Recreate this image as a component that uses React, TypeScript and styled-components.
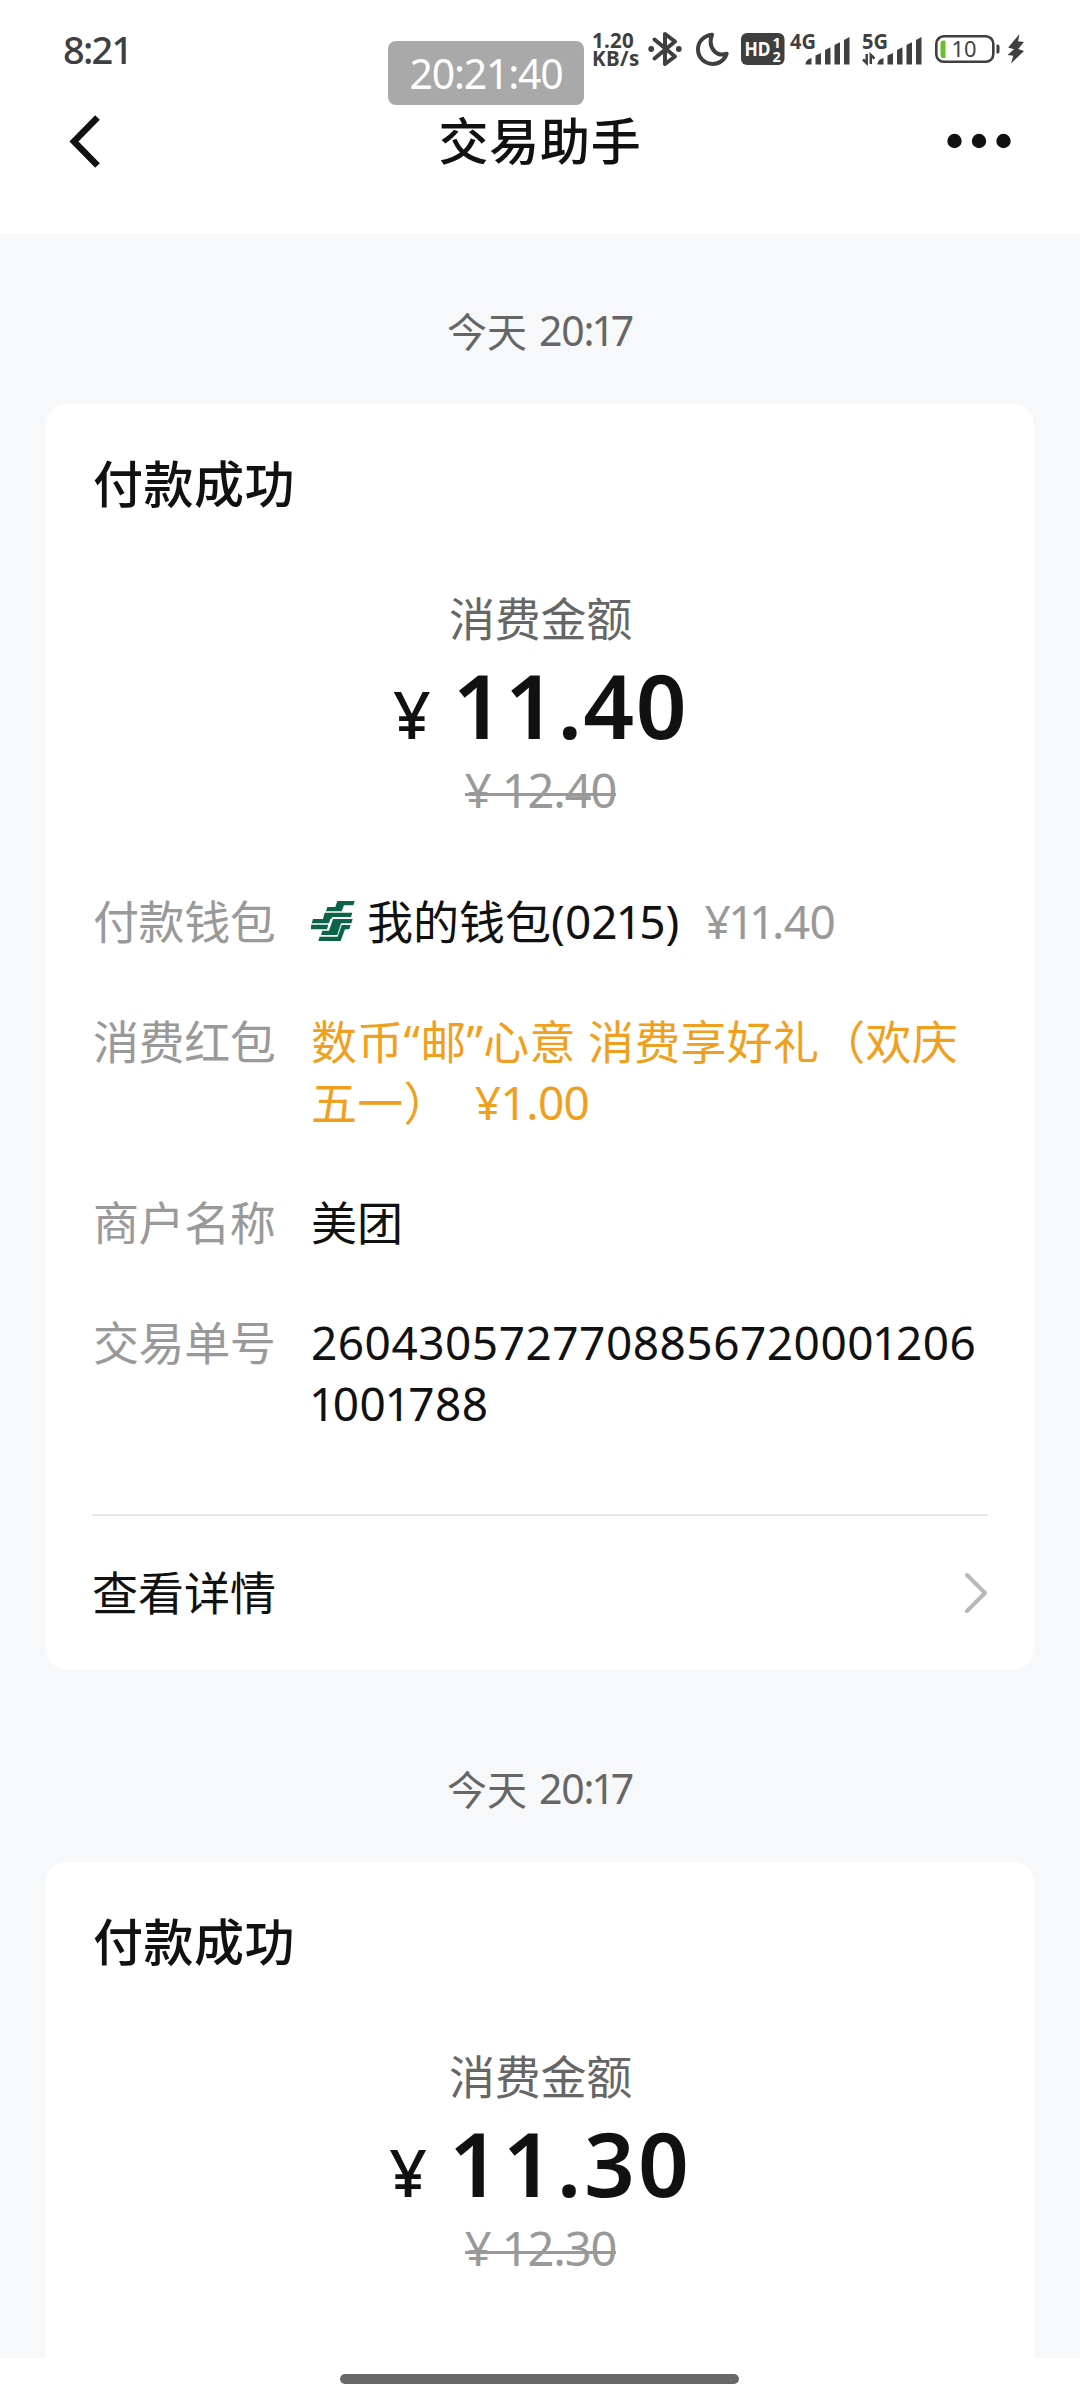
import React from "react";
import styled, { createGlobalStyle } from "styled-components";

const ink = "#3f3f3f";

const GlobalStyle = createGlobalStyle`
  * { box-sizing: border-box; }
  body {
    margin: 0;
    background: #fff;
    font-family: "Noto Sans", "Noto Sans CJK SC", sans-serif;
    color: #111;
  }
`;

const Page = styled.div`
  position: relative;
  width: 1080px;
  height: 2400px;
  overflow: hidden;
  display: flex;
  flex-direction: column;
  background: #fff;
`;

const Header = styled.header`
  flex: none;
  height: 234px;
  background: #fff;
`;

const StatusBar = styled.div`
  display: flex;
  align-items: center;
  justify-content: space-between;
  height: 98px;
  padding: 0 55px 0 63px;
  color: ${ink};
`;

const StatusTime = styled.span`
  font-size: 38px;
  line-height: 50px;
  font-weight: 500;
  letter-spacing: -1.8px;
`;

const StatusIcons = styled.div`
  display: flex;
  align-items: center;
  height: 40px;
`;

const NetSpeed = styled.div`
  width: 48px;
  margin-right: 8px;
  display: flex;
  flex-direction: column;
  font-size: 20.5px;
  line-height: 18px;
  font-weight: 700;
  white-space: nowrap;
`;

const SpeedLine = styled.span<{ $spacing: number }>`
  letter-spacing: ${(p) => p.$spacing}px;
`;

const Icon = styled.svg<{ $gap: number }>`
  display: block;
  flex: none;
  margin-right: ${(p) => p.$gap}px;
  font-family: "Noto Sans", sans-serif;
`;

const ClockBadge = styled.div`
  position: absolute;
  left: 388px;
  top: 41px;
  width: 196px;
  height: 64px;
  border-radius: 8px;
  background: #a9a9a9;
  color: #fff;
  font-size: 41px;
  line-height: 65px;
  letter-spacing: -1.2px;
  text-align: center;
`;

const NavBar = styled.div`
  display: grid;
  grid-template-columns: 1fr auto 1fr;
  align-items: center;
  height: 86px;
  padding: 0 68px;
`;

const NavTitle = styled.h1`
  margin: 0;
  font-size: 50px;
  line-height: 60px;
  font-weight: 500;
  letter-spacing: 0.8px;
`;

const MenuIcon = styled.svg`
  justify-self: end;
`;

const Feed = styled.main`
  flex: none;
  height: 2124px;
  padding: 0 46px;
  overflow: hidden;
  background: #f7f8fa;
`;

const Stamp = styled.div<{ $top: number }>`
  display: flex;
  align-items: center;
  justify-content: center;
  height: 148px;
  margin-top: ${(p) => p.$top}px;
  color: #666;
  font-size: 40px;
  gap: 12px;
`;

const StampTime = styled.span`
  font-size: 41px;
  letter-spacing: -1.2px;
`;

const Card = styled.section`
  padding: 50px 46px 0 47px;
  border-radius: 20px;
  background: #fff;
`;

const CardTitle = styled.h2`
  margin: 0 0 74px;
  font-size: 50px;
  line-height: 60px;
  font-weight: 500;
  letter-spacing: 0.5px;
`;

const Summary = styled.div`
  display: flex;
  flex-direction: column;
  align-items: center;
  margin-bottom: 70px;
`;

const SummaryLabel = styled.div`
  margin-bottom: 6px;
  font-size: 46px;
  line-height: 61px;
  letter-spacing: -0.2px;
  color: #666;
`;

const Amount = styled.div<{ $spacing: number }>`
  display: flex;
  align-items: baseline;
  gap: 22px;
  height: 100px;
  margin-bottom: 5px;
  line-height: 100px;
  font-weight: 600;
  font-size: 89px;
  letter-spacing: ${(p) => p.$spacing}px;
`;

const AmountSign = styled.span`
  font-size: 66px;
  font-weight: 500;
  letter-spacing: 0;
`;

const OldPrice = styled.div`
  position: relative;
  font-size: 47px;
  line-height: 61px;
  letter-spacing: -1.1px;
  color: #999;

  &::after {
    content: "";
    position: absolute;
    left: 0;
    right: 0;
    top: 33px;
    height: 3px;
    background: #999;
  }
`;

const Rows = styled.dl`
  display: flex;
  flex-direction: column;
  gap: 59px;
  margin: 0 0 80px;
`;

const Row = styled.div`
  display: grid;
  grid-template-columns: 218px 1fr;
  font-size: 46px;
  line-height: 61px;
`;

const Term = styled.dt`
  color: #999;
  letter-spacing: -0.4px;
`;

const Value = styled.dd<{ $accent?: boolean }>`
  margin: 0;
  color: ${(p) => (p.$accent ? "#f0a020" : "#111")};
  word-break: break-all;
  letter-spacing: ${(p) => (p.$accent ? 0.25 : 0)}px;
`;

const DigitText = styled.span<{ $spacing: number }>`
  letter-spacing: ${(p) => p.$spacing}px;
`;

const NarrowOne = styled.span`
  margin: 0 -3px 0 -2px;
`;

const Digits = ({ children, spacing = 0.5 }: { children: string; spacing?: number }) => (
  <DigitText $spacing={spacing}>
    {children.split(/(1)/).map((part, i) => (part === "1" ? <NarrowOne key={i}>1</NarrowOne> : part))}
  </DigitText>
);

const Wallet = styled.dd`
  display: flex;
  align-items: center;
  margin: 0;
`;

const Muted = styled.span`
  margin-left: 25px;
  color: #999;
`;

const Bonus = styled.span`
  margin-left: 25px;
  letter-spacing: -0.6px;
`;

const CardLink = styled.a`
  display: flex;
  align-items: center;
  justify-content: space-between;
  height: 155px;
  margin-left: -1px;
  border-top: 2px solid #e8e8e8;
  font-size: 46px;
  line-height: 61px;
`;

const HomeArea = styled.footer`
  display: flex;
  justify-content: center;
  height: 42px;
  padding: 16px 1px 0 0;
  background: #fff;
`;

const HomeBar = styled.div`
  width: 399px;
  height: 10px;
  border-radius: 5px;
  background: #686868;
`;

const Bluetooth = () => (
  <Icon $gap={14} width="34" height="38" viewBox="0 0 34 38" fill="none" stroke={ink} strokeWidth="4">
    <path d="M6.5 9.5 27 26.5 17 34V4l10 7.5L6.5 28.5" strokeLinejoin="round" strokeLinecap="round" />
    <circle cx="3.2" cy="19" r="2.9" fill={ink} stroke="none" />
    <circle cx="30.8" cy="19" r="2.9" fill={ink} stroke="none" />
  </Icon>
);

const Moon = () => (
  <Icon $gap={12} width="33" height="36" viewBox="0 0 33 36" fill="none">
    <path
      d="M16 3.700C8 4.600 2 10.500 2 18.300c0 8.200 6.400 14.600 14.600 14.600 6.700 0 12.300-4.200 14-10.200-9.500 3.500-19.500-5.500-14.600-19Z"
      stroke={ink}
      strokeWidth="4"
      strokeLinejoin="round"
    />
  </Icon>
);

const HdBadge = () => (
  <Icon $gap={5} width="44" height="32" viewBox="0 0 44 32">
    <rect width="43.500" height="32" rx="6" fill={ink} />
    <text x="3.500" y="23" fontSize="19" fontWeight="700" fill="#fff" textLength="26" lengthAdjust="spacingAndGlyphs">
      HD
    </text>
    <text x="31.500" y="15" fontSize="14.500" fontWeight="700" fill="#fff">
      1
    </text>
    <text x="31.500" y="28.500" fontSize="14.500" fontWeight="700" fill="#fff">
      2
    </text>
  </Icon>
);

const Signal = ({ label, gap, active }: { label: string; gap: number; active?: boolean }) => (
  <Icon $gap={gap} width="60" height="34" viewBox="0 0 60 34">
    <text x="0" y="16.500" fontSize="20.500" fontWeight="700" fill={ink} textLength="26" lengthAdjust="spacingAndGlyphs">
      {label}
    </text>
    <g fill={ink}>
      <path d="M15.500 32.500c0-3.500 2.500-5.500 6-6.500v6.500Z" />
      <path d="M25.500 23.500 31 21v11.500h-5.500Z" />
      <path d="M35 18l5.500-2.800v17.300H35Z" />
      <path d="M44.500 13l5.500-2.800v22.300h-5.500Z" />
      <path d="M54 8l5.500-3v27.500H54Z" />
    </g>
    {active && (
      <path d="M4.700 22v9L1 27.500M8.800 32v-9l3.700 3.500" fill="none" stroke={ink} strokeWidth="2.500" />
    )}
  </Icon>
);

const Battery = () => (
  <Icon $gap={6} width="66" height="30" viewBox="0 0 66 30">
    <rect x="1.300" y="2.300" width="57" height="25.500" rx="7.500" fill="none" stroke={ink} strokeWidth="2.600" />
    <path d="M10.500 6.500v17.500H8c-1.800 0-2.500-1.500-2.500-3v-11.500c0-1.500.7-3 2.500-3Z" fill="#6cc02e" />
    <path d="M61.500 10.500h1c1.500 0 2 1 2 2v5c0 1-.5 2-2 2h-1Z" fill={ink} />
    <text x="16.500" y="22.500" fontSize="22.500" fill={ink} textLength="25" lengthAdjust="spacingAndGlyphs">
      10
    </text>
  </Icon>
);

const Bolt = () => (
  <Icon $gap={0} width="18" height="30" viewBox="0 0 18 30">
    <path d="M12.500 0 1.200 13.500l5.800 1.800L0.500 21l5.800.8L4 29.500 17 17l-5.800-2L17 8l-6-.7Z" fill={ink} />
  </Icon>
);

const BankLogo = styled.svg`
  flex: none;
  margin-right: 12px;
`;

const PostBank = () => (
  <BankLogo width="44" height="41" viewBox="0 0 132 123">
    <g fill="#0b6348">
      <path d="M79 0H131L127 13H99L92 31H45L49 18H73Z" />
      <path d="M41 35H124L120 48H64L61 54H36Z" />
      <path d="M6 54H58L54 67H2Z" />
      <path d="M66 54H125L121 67H90L79 102H30L34 89H54Z" />
      <path d="M1 71H52L48 85H-3Z" />
      <path d="M26 107H80L92 72H119L115 85H102L89 120H22Z" />
    </g>
  </BankLogo>
);

const Chevron = () => (
  <svg width="24" height="42" viewBox="0 0 24 42" fill="none">
    <path d="M3 3l18 18L3 39" stroke="#b8b8b8" strokeWidth="4" strokeLinecap="round" strokeLinejoin="round" />
  </svg>
);

interface Payment {
  top: number;
  spacing: number;
  paid: string;
  original: string;
  bonus?: string;
  merchant?: string;
  order?: string;
}

const payments: Payment[] = [
  {
    top: 22,
    spacing: 1.4,
    paid: "11.40",
    original: "12.40",
    bonus: "数币“邮”心意 消费享好礼（欢庆五一）",
    merchant: "美团",
    order: "26043057277088567200012061001788",
  },
  { top: 45, spacing: 2.9, paid: "11.30", original: "12.30" },
];

const PaymentCard = ({ spacing, paid, original, bonus, merchant, order }: Payment) => (
  <Card>
    <CardTitle>付款成功</CardTitle>
    <Summary>
      <SummaryLabel>消费金额</SummaryLabel>
      <Amount $spacing={spacing}>
        <AmountSign>¥</AmountSign>
        <span>{paid}</span>
      </Amount>
      <OldPrice>¥ {original}</OldPrice>
    </Summary>
    <Rows>
      <Row>
        <Term>付款钱包</Term>
        <Wallet>
          <PostBank />
          <span>我的钱包</span>
          <Digits spacing={0.1}>(0215)</Digits>
          <Muted>
            <Digits spacing={-0.5}>{`¥${paid}`}</Digits>
          </Muted>
        </Wallet>
      </Row>
      {bonus && (
        <Row>
          <Term>消费红包</Term>
          <Value $accent>
            {bonus}
            <Bonus>¥1.00</Bonus>
          </Value>
        </Row>
      )}
      {merchant && (
        <Row>
          <Term>商户名称</Term>
          <Value>{merchant}</Value>
        </Row>
      )}
      {order && (
        <Row>
          <Term>交易单号</Term>
          <Value>
            <Digits>{order}</Digits>
          </Value>
        </Row>
      )}
    </Rows>
    {order && (
      <CardLink>
        查看详情
        <Chevron />
      </CardLink>
    )}
  </Card>
);

export default function App() {
  return (
    <>
      <GlobalStyle />
      <Page>
        <Header>
          <StatusBar>
            <StatusTime>8:21</StatusTime>
            <StatusIcons>
              <NetSpeed>
                <SpeedLine $spacing={0.3}>1.20</SpeedLine>
                <SpeedLine $spacing={0.4}>KB/s</SpeedLine>
              </NetSpeed>
              <Bluetooth />
              <Moon />
              <HdBadge />
              <Signal label="4G" gap={12} />
              <Signal label="5G" gap={13} active />
              <Battery />
              <Bolt />
            </StatusIcons>
          </StatusBar>
          <NavBar>
            <svg width="34" height="54" viewBox="0 0 34 54" fill="none">
              <path d="M29.500 3.500 6 27.500l23.500 24" stroke="#111" strokeWidth="6.500" />
            </svg>
            <NavTitle>交易助手</NavTitle>
            <MenuIcon width="66" height="16" viewBox="0 0 66 16" fill="#111">
              <circle cx="8.500" cy="8" r="7.200" />
              <circle cx="33" cy="8" r="7.200" />
              <circle cx="57.500" cy="8" r="7.200" />
            </MenuIcon>
          </NavBar>
        </Header>
        <Feed>
          {payments.map((p) => (
            <React.Fragment key={p.paid}>
              <Stamp $top={p.top}>
                <span>今天</span>
                <StampTime>
                  20:<NarrowOne>1</NarrowOne>7
                </StampTime>
              </Stamp>
              <PaymentCard {...p} />
            </React.Fragment>
          ))}
        </Feed>
        <HomeArea>
          <HomeBar />
        </HomeArea>
        <ClockBadge>20:21:40</ClockBadge>
      </Page>
    </>
  );
}
